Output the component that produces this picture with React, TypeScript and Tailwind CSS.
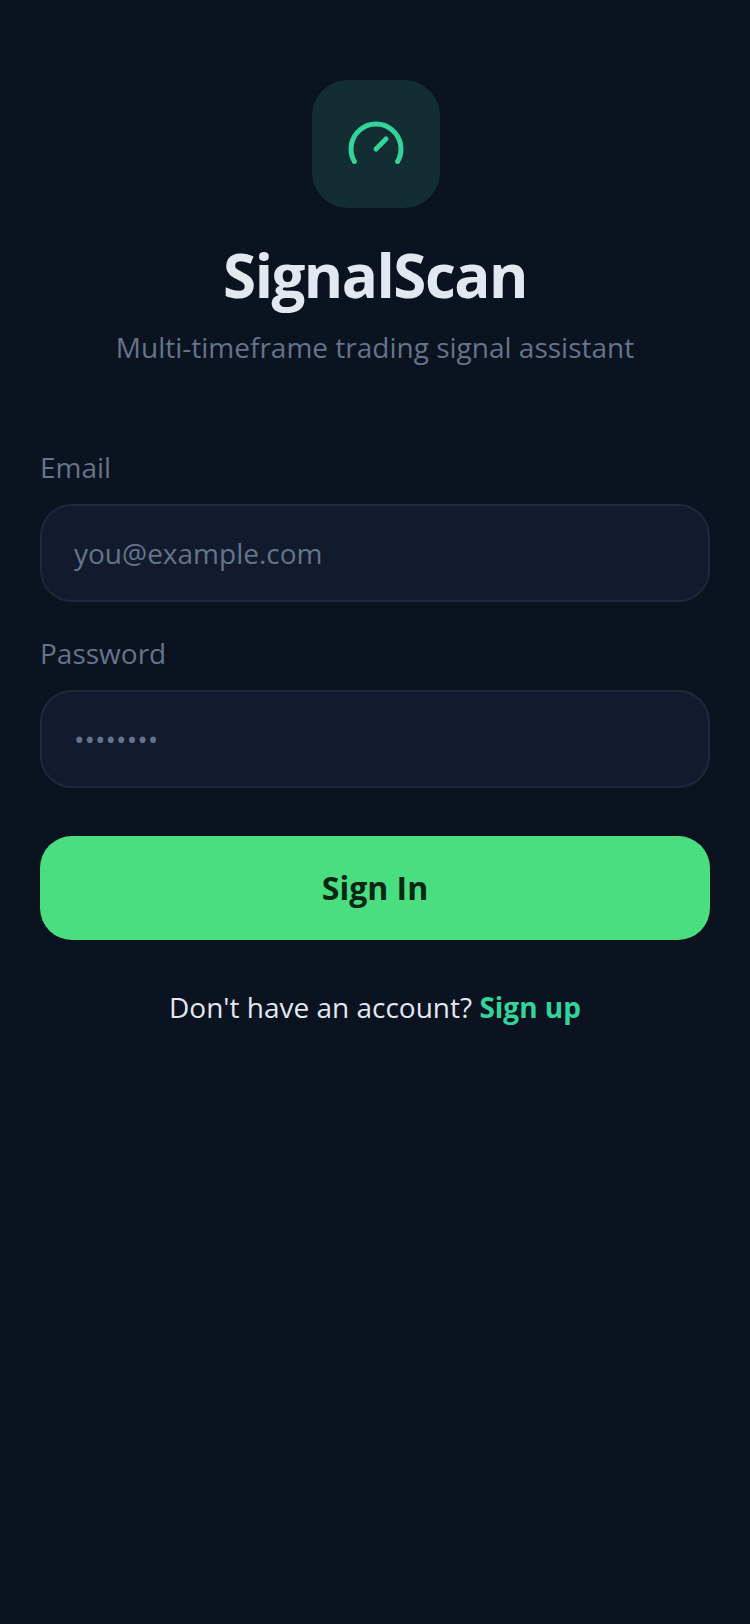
import { Gauge } from "lucide-react";

const inputClass =
    "block w-full h-[98px] px-8 bg-[#111b2d] border-2 border-[#1e293b] rounded-[32px] text-[28px] text-[#e2e8f0] placeholder:text-[#64748b] outline-none";

export default function App() {
    return (
        <div className="min-h-[1624px] bg-[#0b1220] px-10 pt-20 font-['Open_Sans',sans-serif]">
            <div className="flex flex-col items-center">
                <div className="flex items-center justify-center w-32 h-32 ml-px rounded-[36px] bg-[#122e33]">
                    <Gauge size={60} color="#34d399" />
                </div>
                <h1 className="mt-[29px] text-[60px] leading-[76px] font-bold tracking-[-1.5px] text-[#e2e8f0]">SignalScan</h1>
                <p className="mt-[14px] text-[28px] leading-[40px] text-[#64748b]">Multi-timeframe trading signal assistant</p>
            </div>

            <form className="mt-[80px]">
                <label className="block mb-[17px] text-[28px] leading-[40px] text-[#64748b]">Email</label>
                <input type="email" placeholder="you@example.com" className={inputClass} />

                <label className="block mt-[31px] mb-[17px] text-[28px] leading-[40px] text-[#64748b]">Password</label>
                <input type="password" placeholder="••••••••" className={inputClass} />

                <button type="button" className="block w-full h-[104px] mt-12 rounded-[32px] bg-[#4ade80] text-[32px] font-bold text-[#0a2614]">
                    Sign In
                </button>
            </form>

            <p className="mt-[47px] text-center text-[28px] leading-[40px] text-[#e2e8f0]">
                Don't have an account? <span className="font-bold text-[#34d399]">Sign up</span>
            </p>
        </div>
    );
}
